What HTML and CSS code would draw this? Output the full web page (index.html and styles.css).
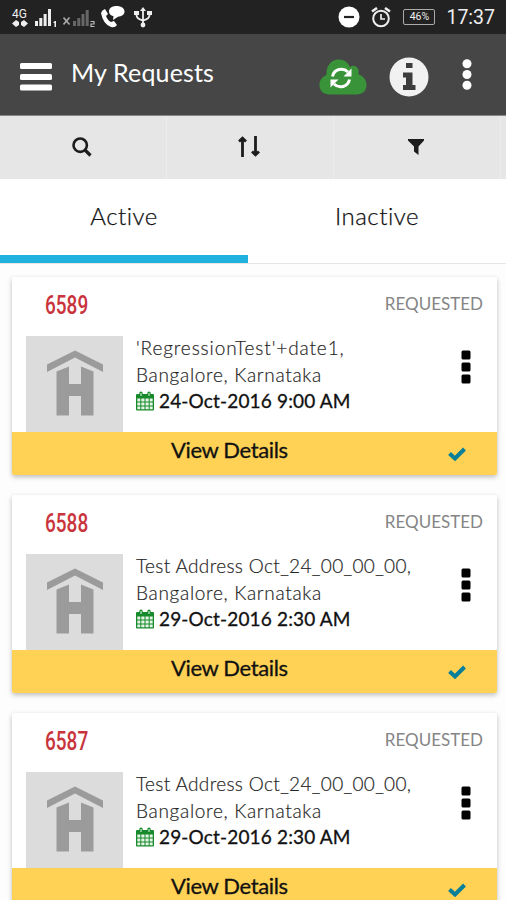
FILE: index.html
```
<!DOCTYPE html>
<html lang="en">
<head>
  <meta charset="UTF-8">
  <meta name="viewport" content="width=device-width, initial-scale=1">
  <title>My Requests</title>
  <link rel="stylesheet" href="styles.css">
</head>
<body>

  <!-- shared icons -->
  <svg class="sprite" width="0" height="0">
    <symbol id="house" viewBox="0 0 97 96">
      <path d="M21 28.500 49 14.500 77 28.500V36L49 21.500 21 36Z"/>
      <path d="M30.500 35.500 43 30.500V48H55V30.500L67.500 35.500V79.500H55V60H43V79.500H30.500Z"/>
    </symbol>
    <symbol id="calendar" viewBox="0 0 18 20">
      <path fill="#178a2c" d="M1 3H17Q18 3 18 4V18.500Q18 19.500 17 19.500H1Q0 19.500 0 18.500V4Q0 3 1 3Z"/>
      <path fill="#e7f5e7" d="M1.300 7.500h3v2.900h-3zM5.300 7.500h3.200v2.900H5.300zM9.500 7.500h3.200v2.900H9.500zM13.700 7.500h3v2.900h-3zM1.300 11.400h3v3h-3zM5.300 11.400h3.200v3H5.300zM9.500 11.400h3.200v3H9.500zM13.700 11.400h3v3h-3zM1.300 15.400h3v2.900h-3zM5.300 15.400h3.200v2.900H5.300zM9.500 15.400h3.200v2.900H9.500zM13.700 15.400h3v2.900h-3z"/>
      <path stroke="#178a2c" stroke-width="3.400" stroke-linecap="round" d="M5 2.200V4.500M13 2.200V4.500"/>
      <path stroke="#e7f5e7" stroke-width="1" d="M5 2V5M13 2V5"/>
    </symbol>
    <symbol id="check" viewBox="0 0 18 14">
      <path fill="none" stroke="#087f98" stroke-width="4" d="M1.500 6.500 7 11.500 16.500 2"/>
    </symbol>
    <symbol id="dots" viewBox="0 0 10 34">
      <rect x=".5" y=".5" width="9" height="9" rx="1.500"/>
      <rect x=".5" y="12.500" width="9" height="9" rx="1.500"/>
      <rect x=".5" y="24.500" width="9" height="9" rx="1.500"/>
    </symbol>
  </svg>

  <div class="statusbar">
    <div class="network">
      <span>4G</span>
      <svg width="16" height="7" viewBox="0 0 16 7" fill="#eee"><path d="M0 3.500 4 0 7 2V5L4 7ZM16 3.500 12 0 9 2V5L12 7Z"/></svg>
    </div>
    <svg class="signal" width="23" height="20" viewBox="0 0 23 20" fill="#eee">
      <path d="M0 13h3v5H0zM4.300 10h3v8h-3zM8.600 6h3v12h-3zM13 1h3v17h-3z"/>
      <path d="M18.500 14 20 13H21V19H19.500V15H18.500Z"/>
    </svg>
    <svg class="signal2" width="32" height="20" viewBox="0 0 32 20">
      <path stroke="#aaa" stroke-width="1.600" d="M.500 9.500 6.500 16.500M6.500 9.500.500 16.500"/>
      <path fill="#666" d="M10 13h3v5h-3zM14.300 10h3v8h-3zM18.500 6h3v12h-3zM22.700 2h3v16h-3z"/>
      <path fill="none" stroke="#bbb" stroke-width="1.200" d="M27.500 13.500H31V16H28V18.500H31.500"/>
    </svg>
    <svg class="call" width="24" height="22" viewBox="0 0 24 22" fill="#fff">
      <path d="M0 7Q1 4 4 3L7 8 5 10Q7 15 10 16L13 15 16 19Q14 22 10 21Q2 18 0 7Z"/>
      <path d="M15.500 0C20 0 23.500 2.200 23.500 5.500S20.500 10.500 17 10.800L12 14 12.500 10.200C9.500 9.500 8 7.800 8 5.500 8 2.200 11 0 15.500 0Z"/>
    </svg>
    <svg class="usb" width="18" height="21" viewBox="0 0 18 21">
      <path fill="none" stroke="#eee" stroke-width="1.800" d="M9 2V19M2.500 6V8Q2.500 12 9 13.500M15.500 6V8Q15.500 12 9 13.500"/>
      <path fill="#eee" d="M9 0 12 4H6ZM0 4h5v4H0zM13 4h5v4h-5z"/>
      <circle cx="9" cy="18" r="2.400" fill="#eee"/>
    </svg>
    <div class="status-right">
      <svg width="22" height="22" viewBox="0 0 22 22"><circle cx="11" cy="11" r="10.500" fill="#fff"/><path stroke="#222" stroke-width="2.200" d="M6 11H16"/></svg>
      <svg class="alarm" width="20" height="21" viewBox="0 0 20 21" fill="none" stroke="#eee">
        <circle cx="10" cy="11.500" r="7.800" stroke-width="2"/>
        <path stroke-width="1.700" d="M10 7V12H14"/>
        <path stroke-width="2.600" d="M1 4.500 6 1M19 4.500 14 1"/>
      </svg>
      <span class="battery">46%</span>
      <span class="clock">17:37</span>
    </div>
  </div>

  <header>
    <svg class="menu" width="32" height="28" viewBox="0 0 32 28" fill="#fff">
      <rect width="32" height="6" rx="1.500"/><rect y="11" width="32" height="6" rx="1.500"/><rect y="21.500" width="32" height="6" rx="1.500"/>
    </svg>
    <h1>My Requests</h1>
    <svg class="cloud" width="48" height="36" viewBox="0 0 48 36">
      <path fill="#399339" d="M11 35.500C4 35.500.500 31.500.500 26 .500 21 3 18 7.500 16 7 7 12 .500 19.500.500 25.500.500 29 3.500 31 8 35.500 4.500 41 8.500 39.500 15.500 45 17.500 47.500 21.500 47.500 26 47.500 32 43.500 35.500 37.500 35.500Z"/>
      <path fill="none" stroke="#fff" stroke-width="3" d="M13.500 17.500C15 10 24 8 29 13M30.500 20.500C29 28 20 30 15 25"/>
      <path fill="#fff" d="M32.500 9.500V17.500H24.500ZM11.500 28.500V20.500H19.500Z"/>
    </svg>
    <svg class="info" width="40" height="40" viewBox="0 0 40 40">
      <circle cx="20" cy="20" r="19.500" fill="#f1f1f1"/>
      <path fill="#3d3d3d" d="M17 6h6.500v5H17zM14 15.500h9.500v12.500h3V33H14v-5h3V20.500h-3z"/>
    </svg>
    <svg class="more" width="10" height="31" viewBox="0 0 10 31" fill="#fff">
      <circle cx="5" cy="4.800" r="4.500"/><circle cx="5" cy="15.500" r="4.500"/><circle cx="5" cy="26.200" r="4.500"/>
    </svg>
  </header>

  <div class="toolbar">
    <div>
      <svg width="20" height="20" viewBox="0 0 20 20" fill="none" stroke="#1c1c1c"><circle cx="8.200" cy="8.200" r="6.700" stroke-width="2.600"/><path stroke-width="3.200" d="M13 13 18.500 18.500"/></svg>
    </div>
    <div>
      <svg width="24" height="21" viewBox="0 0 24 21" fill="none" stroke="#1c1c1c" stroke-width="2.800"><path d="M5.500 21V2M2 5.500 5.500 2.200 9 5.500M18.500 0V19M15 15.500 18.500 18.800 22 15.500"/></svg>
    </div>
    <div>
      <svg width="16" height="16" viewBox="0 0 16 16" fill="#1c1c1c"><path d="M0 0H16V1.500L10.500 7.500V16L6 12.500V7.500L0 1.500Z"/></svg>
    </div>
  </div>

  <nav>
    <a class="active" href="#">Active</a>
    <a href="#">Inactive</a>
  </nav>

  <main>
    <div class="card">
      <div class="card-top">
        <span class="number">6589</span>
        <span class="state">REQUESTED</span>
      </div>
      <div class="card-body">
        <svg class="thumb"><use href="#house"/></svg>
        <div class="address">
          <p class="street wide">'RegressionTest'+date1,</p>
          <p>Bangalore, Karnataka</p>
          <p class="date"><svg width="18" height="20"><use href="#calendar"/></svg><span>24-Oct-2016 9:00 AM</span></p>
        </div>
        <svg class="dots" width="10" height="34"><use href="#dots"/></svg>
      </div>
      <div class="card-footer">
        <span>View Details</span>
        <svg width="18" height="14"><use href="#check"/></svg>
      </div>
    </div>

    <div class="card">
      <div class="card-top">
        <span class="number">6588</span>
        <span class="state">REQUESTED</span>
      </div>
      <div class="card-body">
        <svg class="thumb"><use href="#house"/></svg>
        <div class="address">
          <p class="street">Test Address Oct_24_00_00_00,</p>
          <p>Bangalore, Karnataka</p>
          <p class="date"><svg width="18" height="20"><use href="#calendar"/></svg><span>29-Oct-2016 2:30 AM</span></p>
        </div>
        <svg class="dots" width="10" height="34"><use href="#dots"/></svg>
      </div>
      <div class="card-footer">
        <span>View Details</span>
        <svg width="18" height="14"><use href="#check"/></svg>
      </div>
    </div>

    <div class="card">
      <div class="card-top">
        <span class="number">6587</span>
        <span class="state">REQUESTED</span>
      </div>
      <div class="card-body">
        <svg class="thumb"><use href="#house"/></svg>
        <div class="address">
          <p class="street">Test Address Oct_24_00_00_00,</p>
          <p>Bangalore, Karnataka</p>
          <p class="date"><svg width="18" height="20"><use href="#calendar"/></svg><span>29-Oct-2016 2:30 AM</span></p>
        </div>
        <svg class="dots" width="10" height="34"><use href="#dots"/></svg>
      </div>
      <div class="card-footer">
        <span>View Details</span>
        <svg width="18" height="14"><use href="#check"/></svg>
      </div>
    </div>
  </main>

</body>
</html>
```
FILE: styles.css
```
* {
  box-sizing: border-box;
}
body {
  font-family: Lato, "Liberation Sans", sans-serif;
  background: #fdfdfd;
  margin: 0;
  height: 900px;
  overflow: hidden;
  color: #111;
}
svg {
  display: block;
  flex: none;
}
.sprite {
  position: absolute;
}

/* ========== Status bar ========== */
.statusbar {
  display: flex;
  align-items: flex-start;
  height: 34px;
  padding-left: 12px;
  background: #222;
  color: #eee;
  font-family: Roboto, sans-serif;
}
.network {
  width: 16px;
  padding-top: 9px;
}
.network span {
  display: block;
  font-size: 12px;
  line-height: 11px;
}
.signal {
  margin: 8px 0 0 7px;
}
.signal2 {
  margin: 8px 0 0 5px;
}
.call {
  margin: 6px 0 0 6px;
}
.usb {
  margin: 7px 0 0 9px;
}
.status-right {
  display: flex;
  align-items: center;
  height: 34px;
  margin-left: auto;
  padding-right: 11px;
}
.alarm {
  margin-left: 11px;
}
.battery {
  width: 32px;
  height: 16px;
  margin-left: 12px;
  border: 1px solid #aaa;
  border-radius: 2px;
  font-size: 10.5px;
  line-height: 14px;
  text-align: center;
}
.clock {
  margin-left: 11px;
  font-size: 19.5px;
}

/* ========== Header ========== */
header {
  display: flex;
  align-items: center;
  height: 82px;
  padding: 4px 34px 0 20px;
  background: #464646;
  border-bottom: 1px solid #888;
  color: #fff;
}
header h1 {
  margin: 0 auto 9px 19px;
  font-size: 25px;
  font-weight: normal;
  letter-spacing: 0.15px;
}
.info {
  margin-left: 22px;
}
.more {
  margin: 0 0 5px 33px;
}

/* ========== Toolbar ========== */
.toolbar {
  display: grid;
  grid-template-columns: 167px 167px 167px;
  height: 63px;
  background: #e6e6e6;
}
.toolbar div {
  display: flex;
  align-items: center;
  justify-content: center;
  border-right: 1px solid #ececec;
  padding: 0 3px 2px 0;
}

/* ========== Tabs ========== */
nav {
  display: flex;
  height: 85px;
  background: #fff;
  border-bottom: 1px solid #e8e4e4;
}
nav a {
  width: 248px;
  padding-top: 21px;
  color: #111;
  font-size: 24px;
  font-weight: 300;
  letter-spacing: 0.5px;
  line-height: 31px;
  text-align: center;
  text-decoration: none;
  -webkit-text-stroke: 0.25px #111;
}
nav a + a {
  width: 258px;
}
nav .active {
  border-bottom: 8px solid #20b1df;
}

/* ========== Request cards ========== */
main {
  display: flex;
  flex-direction: column;
  gap: 20px;
  padding: 13px 9px 0 12px;
}
.card {
  flex: none;
  height: 198px;
  background: #fff;
  border-radius: 2px;
  box-shadow: 0 2px 5px rgba(0,0,0,0.26);
}
.card-top {
  display: flex;
  justify-content: space-between;
  height: 59px;
  padding: 14px 14px 0 33px;
}
.number {
  color: #c9343c;
  font-family: Roboto, sans-serif;
  font-size: 25px;
  font-weight: 500;
  line-height: 30px;
  transform: scaleX(0.76);
  transform-origin: left;
}
.state {
  color: #858585;
  font-size: 17px;
  line-height: 25px;
}
.card-body {
  display: flex;
  height: 96px;
  padding: 0 26px 0 14px;
}
.thumb {
  width: 97px;
  height: 96px;
  background: #dcdcdc;
  fill: #9b9b9b;
}
.address {
  flex: 1;
  margin: -1px 0 0 13px;
}
.address p {
  margin: 0;
  color: #222;
  font-size: 19px;
  font-weight: 300;
  letter-spacing: 0.7px;
  line-height: 26.5px;
  white-space: nowrap;
  -webkit-text-stroke: 0.2px #333;
}
.address .street {
  letter-spacing: 0.35px;
}
.address .wide {
  letter-spacing: 0.88px;
}
.address .date {
  display: flex;
  align-items: center;
  gap: 5px;
  color: #111;
  font-weight: normal;
  letter-spacing: 0.16px;
  -webkit-text-stroke: 0.3px #111;
}
.dots {
  margin-top: 14px;
}
.card-footer {
  display: flex;
  align-items: flex-start;
  justify-content: space-between;
  height: 43px;
  padding: 2px 31px 0 159px;
  background: #ffd155;
  border-radius: 0 0 2px 2px;
  font-size: 22px;
  letter-spacing: -0.37px;
  line-height: 31px;
  -webkit-text-stroke: 0.3px #111;
}
.card-footer svg {
  margin-top: 13px;
}
```
